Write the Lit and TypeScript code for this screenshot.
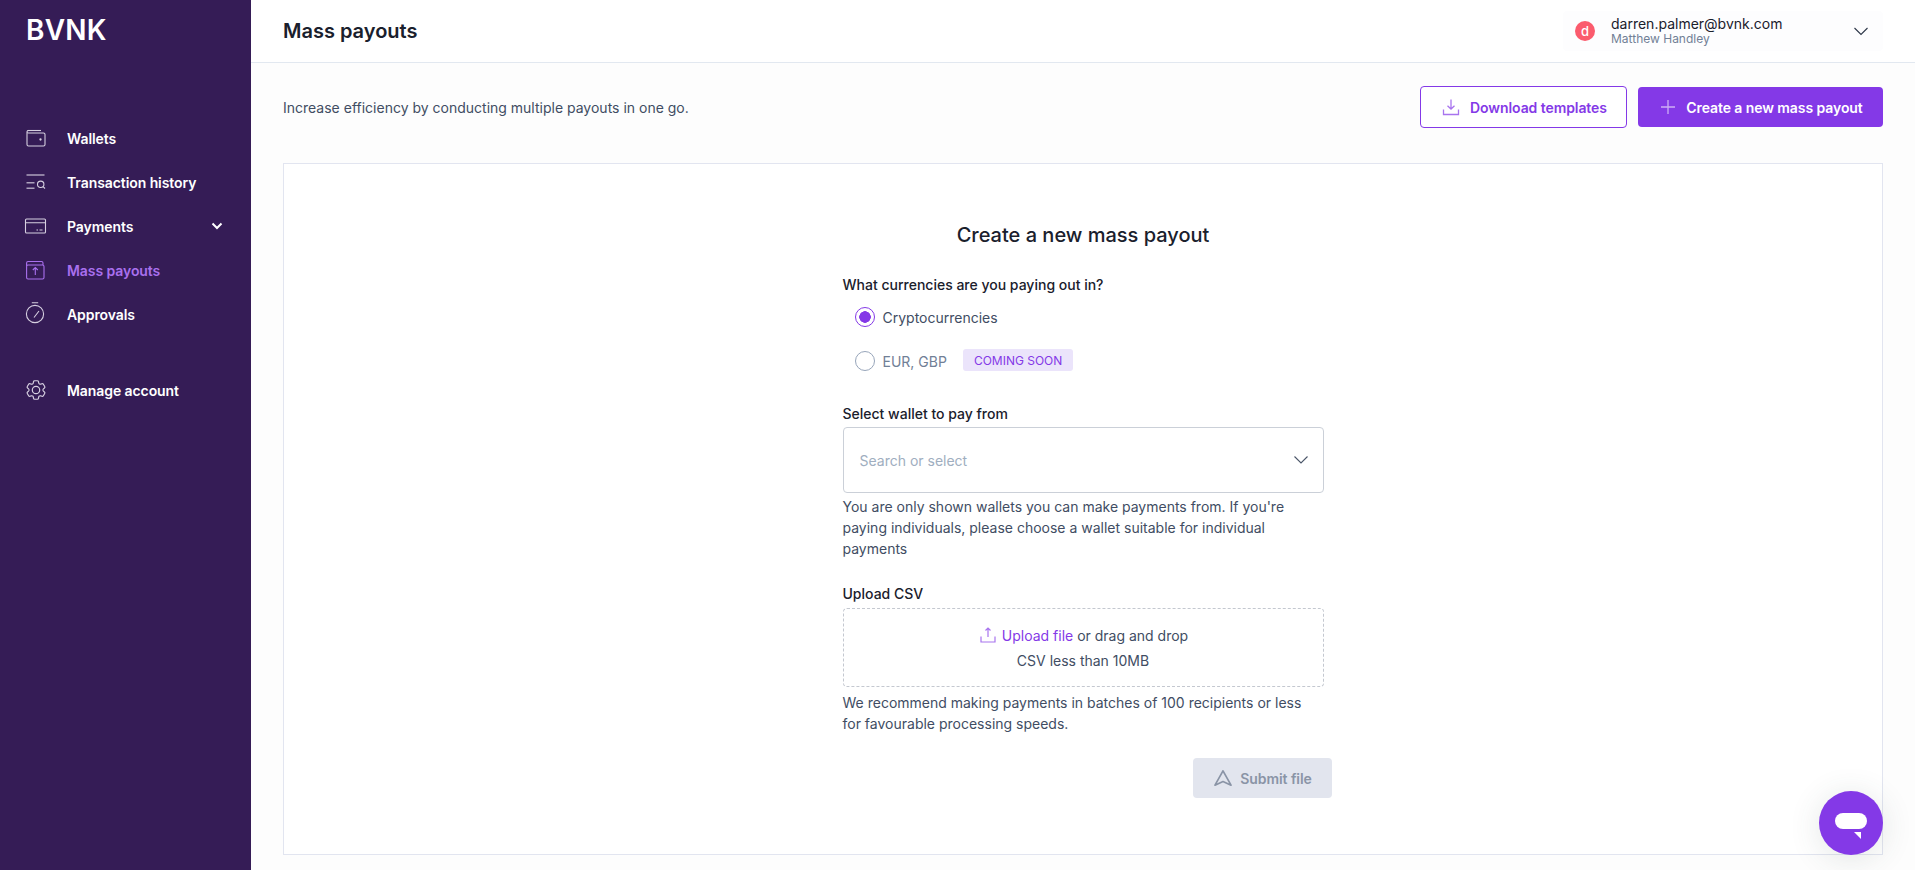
import { LitElement, css, html, svg } from 'lit';
import { customElement } from 'lit/decorators.js';

const navItems = [
	{ label: 'Wallets', icon: svg`<path d="M1.500 1.500h13.500"/><path d="M2.500 4h15A1.500 1.500 0 0 1 19 5.500v10a1.500 1.500 0 0 1-1.500 1.500h-15A1.500 1.500 0 0 1 1 15.500V3A1.500 1.500 0 0 1 2.500 1.500M1.500 3.500A1.500 1.500 0 0 0 2.500 4"/><circle cx="14.500" cy="10.500" r=".6" fill="currentColor"/>` },
	{ label: 'Transaction history', icon: svg`<path d="M.5 2h18M.5 9.700h8M.5 15.300h8" stroke-width="1.500" opacity=".75"/><circle cx="14.700" cy="11.300" r="3.200"/><path d="M17 13.600 19 15.500"/>` },
	{ label: 'Payments', icon: svg`<rect x="-.5" y="2" width="20" height="14" rx="1"/><path d="M-.5 5.700h20M10.500 13h1.500M13.500 13h3"/>` },
	{ label: 'Mass payouts', active: true, icon: svg`<path d="M2 .5h13.500A1.500 1.500 0 0 1 17 2v2M.6 5.500A1.500 1.500 0 0 1 2 4h14.500A1.500 1.500 0 0 1 18 5.500v11a1.500 1.500 0 0 1-1.500 1.500H2A1.500 1.500 0 0 1 .6 16.500zM.6 5V2A1.500 1.500 0 0 1 2 .5M9.300 14V6.500M6.800 9l2.500-2.500L11.800 9"/>` },
	{ label: 'Approvals', icon: svg`<circle cx="9" cy="9" r="8.600"/><path d="M5.800-2.300h6.400M8 12.500l5-6.500" />` },
];

const gear = svg`<path d="M9.594 3.940c.09-.542.56-.94 1.110-.94h2.593c.55 0 1.020.398 1.110.94l.213 1.281c.063.374.313.686.645.870.074.04.147.083.22.127.325.196.72.257 1.075.124l1.217-.456a1.125 1.125 0 0 1 1.370.49l1.296 2.247a1.125 1.125 0 0 1-.26 1.431l-1.003.827c-.293.241-.438.613-.43.992a7.723 7.723 0 0 1 0 .255c-.008.378.137.75.43.991l1.004.827c.424.35.534.955.26 1.430l-1.298 2.247a1.125 1.125 0 0 1-1.369.491l-1.217-.456c-.355-.133-.75-.072-1.076.124a6.470 6.470 0 0 1-.22.128c-.331.183-.581.495-.644.869l-.213 1.281c-.09.543-.56.94-1.110.94h-2.594c-.55 0-1.019-.398-1.110-.94l-.213-1.281c-.062-.374-.312-.686-.644-.87a6.520 6.520 0 0 1-.22-.127c-.325-.196-.72-.257-1.076-.124l-1.217.456a1.125 1.125 0 0 1-1.369-.49l-1.297-2.247a1.125 1.125 0 0 1 .26-1.431l1.004-.827c.292-.24.437-.613.43-.991a6.932 6.932 0 0 1 0-.255c.007-.38-.138-.751-.43-.992l-1.004-.827a1.125 1.125 0 0 1-.26-1.430l1.297-2.247a1.125 1.125 0 0 1 1.370-.491l1.216.456c.356.133.751.072 1.076-.124.072-.044.146-.086.22-.128.332-.183.582-.495.644-.869l.214-1.280Z"/><circle cx="12" cy="12" r="3.600"/>`;

@customElement('app-root')
export class AppRoot extends LitElement {
	static styles = css`
		:host {
			display: flex;
			height: 100vh;
			overflow: hidden;
			position: relative;
			background: #fdfdfd;
			font-family: Inter, 'Liberation Sans', sans-serif;
			color: #1a202c;
			font-size: 14px;
		}
		.sidebar {
			width: 251px;
			flex: none;
			box-sizing: border-box;
			background: #351c56;
			color: #fff;
			padding: 0 26px;
		}
		.logo {
			font-size: 28px;
			line-height: 34px;
			font-weight: 600;
			letter-spacing: 0.2px;
			padding-top: 13px;
			margin-bottom: 69px;
		}
		.nav {
			height: 44px;
			display: flex;
			align-items: center;
			gap: 21px;
			font-weight: 600;
			font-size: 14px;
			letter-spacing: -0.08px;
			color: #fff;
		}
		.nav svg.ico {
			color: #d6cfe0;
			overflow: visible;
		}
		.nav svg.low {
			margin-top: 2px;
		}
		.nav.active {
			color: #a970ee;
		}
		.nav.active svg.ico {
			color: #a970ee;
		}
		.nav .grow {
			flex: 1;
		}
		.nav .chev {
			margin-right: 2px;
		}
		.spacer {
			height: 32px;
		}
		.main {
			flex: 1;
			display: flex;
			flex-direction: column;
			min-width: 0;
		}
		header {
			height: 62px;
			flex: none;
			background: #fff;
			border-bottom: 1px solid #e2e8f0;
			display: flex;
			align-items: center;
			justify-content: space-between;
			padding: 0 32px;
		}
		h1 {
			margin: 0;
			font-size: 20px;
			line-height: 28px;
			font-weight: 600;
			color: #1a202c;
		}
		.user {
			width: 320px;
			height: 40px;
			box-sizing: border-box;
			padding: 0 12px;
			background: #fdfdfe;
			border-radius: 4px;
			display: flex;
			align-items: center;
			gap: 16px;
		}
		.avatar {
			width: 20px;
			height: 20px;
			border-radius: 50%;
			background: #fb5b6d;
			color: #fff;
			font-size: 13px;
			font-weight: 500;
			display: flex;
			align-items: center;
			justify-content: center;
		}
		.who {
			flex: 1;
			display: flex;
			flex-direction: column;
		}
		.email {
			font-size: 14px;
			line-height: 16px;
			color: #1a202c;
		}
		.name {
			font-size: 12px;
			line-height: 14px;
			color: #718096;
		}
		.intro {
			display: flex;
			align-items: center;
			justify-content: space-between;
			padding: 23px 32px 0;
			height: 42px;
			color: #414d63;
		}
		.btns {
			display: flex;
			gap: 11px;
			align-items: center;
		}
		.btn {
			display: flex;
			align-items: center;
			justify-content: center;
			box-sizing: border-box;
			border-radius: 4px;
			font-weight: 600;
			font-size: 14px;
			letter-spacing: -0.08px;
			gap: 10px;
		}
		.btn.outline {
			width: 207px;
			height: 42px;
			padding-left: 2px;
			background: #fff;
			border: 1px solid #8439e7;
			color: #8439e7;
		}
		.btn.solid {
			width: 245px;
			height: 40px;
			padding-left: 2px;
			background: #8439e7;
			color: #fff;
		}
		.card {
			margin: 35px 32px 0;
			height: 692px;
			box-sizing: border-box;
			background: #fff;
			border: 1px solid #e2e5f0;
			display: flex;
			flex-direction: column;
			align-items: center;
			padding-top: 56px;
		}
		h2 {
			margin: 0 0 25px;
			font-size: 20px;
			line-height: 30px;
			font-weight: 500;
			color: #1a202c;
		}
		form {
			width: 481px;
			margin: 0;
		}
		.label {
			font-weight: 500;
			line-height: 20px;
			color: #1a202c;
		}
		.radio {
			height: 44px;
			display: flex;
			align-items: center;
			padding-left: 12px;
			gap: 8px;
			color: #414d63;
		}
		.radio.off {
			color: #718096;
		}
		.dot {
			width: 20px;
			height: 20px;
			box-sizing: border-box;
			border-radius: 50%;
			border: 1.5px solid #97a5ba;
			flex: none;
		}
		.dot.on {
			border-color: #8439e7;
			background: radial-gradient(circle, #8439e7 0 5.5px, transparent 6px);
		}
		.badge {
			margin-left: 8px;
			margin-top: -2px;
			height: 22px;
			padding: 0 11px;
			display: flex;
			align-items: center;
			background: #ebe4fb;
			border-radius: 3px;
			color: #8439e7;
			font-size: 12px;
			font-weight: 400;
		}
		.radios {
			margin-bottom: 21px;
		}
		.select {
			margin-top: 3px;
			height: 66px;
			box-sizing: border-box;
			border: 1px solid #cbd0d8;
			border-radius: 4px;
			display: flex;
			align-items: center;
			justify-content: space-between;
			padding: 0 14px 0 16px;
			color: #a0aec0;
		}
		.select svg {
			color: #4a5568;
		}
		.help {
			margin: 3px 0 0;
			line-height: 21px;
			color: #414d63;
		}
		.drop + .help {
			margin-top: 5px;
		}
		.upload-label {
			margin-top: 25px;
		}
		.drop {
			margin-top: 4px;
			height: 79px;
			box-sizing: border-box;
			border: 1px dashed #c4c8d0;
			border-radius: 4px;
			display: flex;
			flex-direction: column;
			align-items: center;
			justify-content: center;
			gap: 4px;
			line-height: 21px;
			color: #414d63;
		}
		.drop .row {
			display: flex;
			align-items: center;
			gap: 6px;
			padding-left: 2px;
		}
		.drop a {
			color: #8439e7;
		}
		.submit-row {
			display: flex;
			justify-content: flex-end;
			margin: 24px -8px 0 0;
		}
		.submit {
			width: 139px;
			height: 40px;
			padding-left: 2px;
			background: #e2e5ee;
			color: #8a94a6;
			gap: 8px;
		}
		.chat {
			position: absolute;
			left: 1819px;
			top: 791px;
			width: 64px;
			height: 64px;
			border-radius: 50%;
			background: #8439e7;
			box-shadow: 0 4px 32px rgba(60, 80, 70, 0.14);
			display: flex;
			align-items: center;
			justify-content: center;
		}
	`;

	render() {
		return html`
			<aside class="sidebar">
				<div class="logo">BVNK</div>
				${navItems.map((n) => html`
					<div class="nav ${n.active ? 'active' : ''}">
						<svg class="ico low" width="20" height="20" viewBox="0 0 20 20" fill="none" stroke="currentColor" stroke-width="1.1">${n.icon}</svg>
						<span class="grow">${n.label}</span>
						${n.label === 'Payments' ? html`<svg class="chev" width="12" height="8" viewBox="0 0 12 8" fill="none" stroke="#fff" stroke-width="2"><path d="M1.500 1.500 6 6l4.500-4.500"/></svg>` : ''}
					</div>
				`)}
				<div class="spacer"></div>
				<div class="nav">
					<svg class="ico" width="20" height="20" viewBox="2.300 2.300 19.400 19.400" fill="none" stroke="currentColor" stroke-width="1.150">${gear}</svg>
					<span class="grow">Manage account</span>
				</div>
			</aside>
			<div class="main">
				<header>
					<h1>Mass payouts</h1>
					<div class="user">
						<div class="avatar">d</div>
						<div class="who">
							<span class="email">darren.palmer@bvnk.com</span>
							<span class="name">Matthew Handley</span>
						</div>
						<svg width="20" height="20" viewBox="0 0 20 20" fill="none" stroke="#2d3748" stroke-width="1.1"><path d="M3.500 7 10 13.500 16.500 7"/></svg>
					</div>
				</header>
				<div class="intro">
					<span>Increase efficiency by conducting multiple payouts in one go.</span>
					<div class="btns">
						<div class="btn outline">
							<svg width="18" height="18" viewBox="0 0 18 18" fill="none" stroke="#a874ee" stroke-width="1.300"><path d="M9 1.500v9.500M5.500 7.800 9 11l3.500-3.200M1.500 11.500v5h15v-5"/></svg>
							Download templates
						</div>
						<div class="btn solid">
							<svg width="16" height="16" viewBox="0 0 16 16" fill="none" stroke="#cdaef5" stroke-width="1.300"><path d="M8 1v14M1 8h14"/></svg>
							Create a new mass payout
						</div>
					</div>
				</div>
				<section class="card">
					<h2>Create a new mass payout</h2>
					<form>
						<div class="label">What currencies are you paying out in?</div>
						<div class="radios">
							<div class="radio"><span class="dot on"></span>Cryptocurrencies</div>
							<div class="radio off"><span class="dot"></span>EUR, GBP<span class="badge">COMING SOON</span></div>
						</div>
						<div class="label">Select wallet to pay from</div>
						<div class="select">
							<span>Search or select</span>
							<svg width="16" height="16" viewBox="0 0 16 16" fill="none" stroke="currentColor" stroke-width="1.100"><path d="M1.500 4.500 8 11l6.500-6.500"/></svg>
						</div>
						<p class="help">You are only shown wallets you can make payments from. If you're paying individuals, please choose a wallet suitable for individual payments</p>
						<div class="label upload-label">Upload CSV</div>
						<div class="drop">
							<div class="row">
								<svg width="16" height="16" viewBox="0 0 16 16" fill="none" stroke="#a874ee" stroke-width="1.200"><path d="M8 1v9M5.500 3.500 8 1l2.500 2.500M1 9.500V15h14V9.500"/></svg>
								<span><a>Upload file</a> or drag and drop</span>
							</div>
							<div>CSV less than 10MB</div>
						</div>
						<p class="help">We recommend making payments in batches of 100 recipients or less for favourable processing speeds.</p>
						<div class="submit-row">
							<div class="btn submit">
								<svg width="18" height="18" viewBox="0 0 18 18" fill="none" stroke="#8a94a6" stroke-width="1.700" stroke-linejoin="round"><path d="M9 1.800 1 16.200 9 12.500l8 3.700z"/></svg>
								Submit file
							</div>
						</div>
					</form>
				</section>
			</div>
			<div class="chat">
				<svg width="32" height="32" viewBox="0 0 32 32"><rect x="0" y="6" width="32" height="16" rx="8" fill="#fff"/><path d="M19 25h7v7z" fill="#fff"/></svg>
			</div>
		`;
	}
}
